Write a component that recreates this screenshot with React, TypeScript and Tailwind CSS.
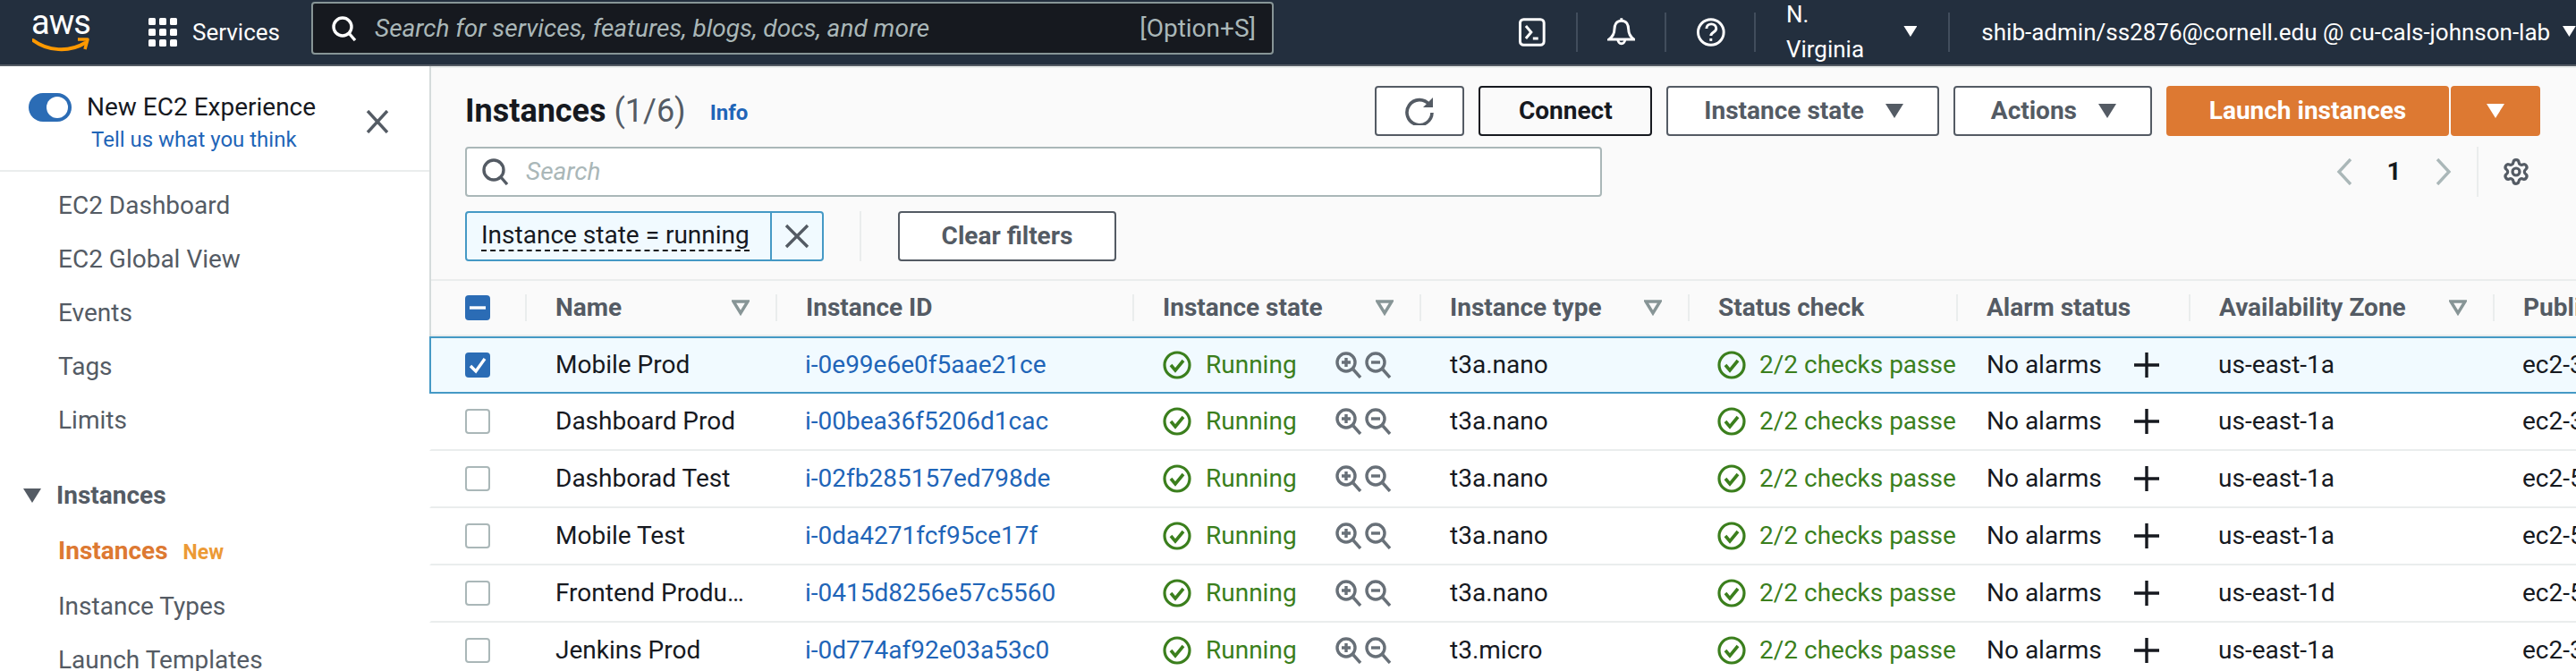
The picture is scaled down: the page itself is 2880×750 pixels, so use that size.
import { Settings } from "lucide-react";

const font = "font-['Roboto','Liberation_Sans',sans-serif]";

const instances = [
  { name: "Mobile Prod", id: "i-0e99e6e0f5aae21ce", type: "t3a.nano", zone: "us-east-1a", dns: "ec2-3-91-44-120.compute-1", selected: true },
  { name: "Dashboard Prod", id: "i-00bea36f5206d1cac", type: "t3a.nano", zone: "us-east-1a", dns: "ec2-3-84-12-77.compute-1" },
  { name: "Dashborad Test", id: "i-02fb285157ed798de", type: "t3a.nano", zone: "us-east-1a", dns: "ec2-54-80-31-9.compute-1" },
  { name: "Mobile Test", id: "i-0da4271fcf95ce17f", type: "t3a.nano", zone: "us-east-1a", dns: "ec2-52-23-17-64.compute-1" },
  { name: "Frontend Production", id: "i-0415d8256e57c5560", type: "t3a.nano", zone: "us-east-1d", dns: "ec2-54-90-66-18.compute-1" },
  { name: "Jenkins Prod", id: "i-0d774af92e03a53c0", type: "t3.micro", zone: "us-east-1a", dns: "ec2-3-208-9-41.compute-1" },
];

const columns = [
  { label: "Name", sort: true },
  { label: "Instance ID" },
  { label: "Instance state", sort: true },
  { label: "Instance type", sort: true },
  { label: "Status check" },
  { label: "Alarm status" },
  { label: "Availability Zone", sort: true },
  { label: "Public IPv4 DNS" },
];

const gridCols = "grid-cols-[105px_280px_399px_321px_300px_300px_260px_340px_1fr]";

function Caret({ className }: { className: string }) {
  return (
    <svg viewBox="0 0 20 16" className={className} fill="currentColor">
      <path d="M0 0h20L10 16z" />
    </svg>
  );
}

function HeaderDivider() {
  return <span className="h-[44px] w-[2px] shrink-0 bg-[#414d5c]" />;
}

function TopBar() {
  return (
    <header className="flex h-[74px] shrink-0 items-start border-b-2 border-[#545b64] bg-[#232f3e] text-white">
      <div className="flex h-[72px] items-center">
        <div className="ml-[36px] flex w-[64px] flex-col items-center">
          <span className="h-[30px] text-[38px] leading-[26px] font-normal tracking-[-1px]">aws</span>
          <svg viewBox="0 0 64 18" className="h-[18px] w-[64px]" fill="none">
            <path d="M1 3c16 12 40 14 58 3" stroke="#f90" strokeWidth="4" strokeLinecap="round" />
            <path d="M51 2h11l-3 11" stroke="#f90" strokeWidth="3.5" strokeLinejoin="round" />
          </svg>
        </div>
        <span className="ml-[33px]">
          <HeaderDivider />
        </span>
        <svg viewBox="0 0 32 32" className="ml-[33px] h-[32px] w-[32px]" fill="white">
          {[0, 12, 24].flatMap((y) =>
            [0, 12, 24].map((x) => <rect key={`${x}-${y}`} x={x} y={y} width="8" height="8" rx="1.5" />),
          )}
        </svg>
        <span className="ml-[17px] text-[26px]">Services</span>
      </div>
      <div className="mt-[2px] ml-[35px] flex h-[59px] w-[1078px] items-center rounded-[4px] border-2 border-[#879596] bg-[#16191f] pr-[18px] pl-[21px] text-[#aab7b8]">
        <svg viewBox="0 0 28 28" className="h-[28px] w-[28px]" fill="none" stroke="white" strokeWidth="3.4">
          <circle cx="12" cy="12" r="10" />
          <path d="M19 19l7 8" />
        </svg>
        <span className="ml-[20px] text-[28px] italic">Search for services, features, blogs, docs, and more</span>
        <span className="ml-auto text-[28px]">[Option+S]</span>
      </div>
      <div className="flex h-[72px] items-center">
        <svg viewBox="0 0 30 32" className="ml-[274px] h-[32px] w-[30px]" fill="none" stroke="white" strokeWidth="3">
          <rect x="1.5" y="1.5" width="27" height="29" rx="4" />
          <path d="M8 9l6 7-6 7M16 23h6" />
        </svg>
        <span className="ml-[34px] flex">
          <HeaderDivider />
        </span>
        <svg viewBox="0 0 32 32" className="ml-[33px] h-[32px] w-[32px]" fill="none" stroke="white" strokeWidth="3">
          <path d="M16 3c-6 0-8 5-8 10 0 5-2 8-6 11h28c-4-3-6-6-6-11 0-5-2-10-8-10z" />
          <path d="M12 24a4 5 0 0 0 8 0M16 0v3" />
        </svg>
        <span className="ml-[33px] flex">
          <HeaderDivider />
        </span>
        <svg viewBox="0 0 32 32" className="ml-[34px] h-[32px] w-[32px]" fill="none" stroke="white" strokeWidth="3">
          <circle cx="16" cy="16" r="14.5" />
          <path d="M11 12c0-7 11-7 11 0 0 4-6 4-6 8" />
          <path d="M16 23v3" />
        </svg>
        <span className="ml-[32px] flex">
          <HeaderDivider />
        </span>
        <span className="ml-[34px] text-[26px]">N. Virginia</span>
        <Caret className="mt-[-2px] ml-[13px] h-[12px] w-[16px]" />
        <span className="ml-[35px] flex">
          <HeaderDivider />
        </span>
        <span className="ml-[35px] text-[26px] whitespace-nowrap">shib-admin/ss2876@cornell.edu @ cu-cals-johnson-lab</span>
        <Caret className="mt-[-2px] ml-[14px] h-[12px] w-[15px]" />
      </div>
    </header>
  );
}

function SideNav() {
  const top = ["EC2 Dashboard", "EC2 Global View", "Events", "Tags", "Limits"];
  return (
    <aside className="w-[482px] shrink-0 border-r-2 border-[#d5dbdb] bg-white text-[#545b64]">
      <div className="relative h-[118px] border-b-2 border-[#eaeded]">
        <div className="flex items-center pt-[30px] pl-[32px]">
          <span className="flex h-[32px] w-[48px] items-center justify-end rounded-full bg-[#2b6cb5] pr-[4px]">
            <span className="h-[24px] w-[24px] rounded-full bg-white" />
          </span>
          <span className="ml-[17px] text-[28px] leading-[32px] text-[#16191f]">New EC2 Experience</span>
        </div>
        <p className="mt-[5px] ml-[102px] text-[24px] leading-[30px] text-[#1f65b8]">Tell us what you think</p>
        <svg viewBox="0 0 26 26" className="absolute top-[49px] left-[409px] h-[26px] w-[26px]" fill="none" stroke="#545b64" strokeWidth="3.4">
          <path d="M2 1l22 24M24 1L2 25" />
        </svg>
      </div>
      <nav className="pt-[8px]">
        {top.map((item) => (
          <div key={item} className="flex h-[60px] items-center pl-[65px] text-[28px]">
            {item}
          </div>
        ))}
        <div className="mt-[24px] flex h-[60px] items-center pl-[26px] text-[28px] font-bold">
          <Caret className="h-[16px] w-[20px]" />
          <span className="ml-[17px]">Instances</span>
        </div>
        <div className="flex h-[64px] items-center pl-[65px] text-[28px] font-bold text-[#dd7932]">
          Instances
          <span className="mt-[4px] ml-[17px] text-[23px] text-[#ec9a35]">New</span>
        </div>
        {["Instance Types", "Launch Templates"].map((item) => (
          <div key={item} className="flex h-[60px] items-center pl-[65px] text-[28px]">
            {item}
          </div>
        ))}
      </nav>
    </aside>
  );
}

function OutlineButton({ label, caret }: { label: string; caret?: boolean }) {
  return (
    <button className="flex h-[56px] items-center justify-center rounded-[4px] border-2 border-[#545b64] bg-white pl-[40px] pr-[38px] text-[28px] font-bold text-[#545b64]">
      {label}
      {caret && <Caret className="ml-[24px] h-[16px] w-[20px]" />}
    </button>
  );
}

function SearchIcon() {
  return (
    <svg viewBox="0 0 30 30" className="h-[30px] w-[30px]" fill="none" stroke="#545b64" strokeWidth="3.4">
      <circle cx="13" cy="13" r="11" />
      <path d="M21 21l7 8" />
    </svg>
  );
}

function Toolbar() {
  return (
    <div className="pt-[20px] pr-[40px] pl-[38px]">
      <div className="flex h-[56px] items-center">
        <h1 className="text-[36px] font-bold text-[#16191f]">
          Instances <span className="font-normal text-[#545b64]">(1/6)</span>
        </h1>
        <span className="mt-[4px] ml-[27px] text-[24px] font-bold text-[#1f65b8]">Info</span>
        <div className="ml-auto flex gap-[16px]">
          <button className="flex h-[56px] w-[100px] items-center justify-center rounded-[4px] border-2 border-[#545b64] bg-white">
            <svg viewBox="0 0 32 32" className="h-[32px] w-[32px]" fill="none" stroke="#545b64" strokeWidth="3.6">
              <path d="M27 9a14 14 0 1 0 3 9" />
              <path d="M31 1v11H20z" fill="#545b64" stroke="none" />
            </svg>
          </button>
          <button className="h-[56px] w-[194px] rounded-[4px] border-2 border-[#16191f] bg-[#fafafa] text-[28px] font-bold text-[#16191f]">
            Connect
          </button>
          <OutlineButton label="Instance state" caret />
          <OutlineButton label="Actions" caret />
          <div className="flex gap-[2px]">
            <button className="h-[56px] w-[316px] rounded-[4px] bg-[#dd7932] text-[28px] font-bold text-white">Launch instances</button>
            <button className="flex h-[56px] w-[100px] items-center justify-center rounded-[4px] bg-[#dd7932] text-white">
              <Caret className="h-[16px] w-[20px]" />
            </button>
          </div>
        </div>
      </div>
      <div className="mt-[12px] flex h-[56px] items-center">
        <div className="flex h-[56px] w-[1271px] items-center rounded-[4px] border-2 border-[#aab7b8] bg-white pl-[17px]">
          <SearchIcon />
          <span className="ml-[19px] text-[28px] text-[#aab7b8] italic">Search</span>
        </div>
        <div className="ml-auto flex h-[56px] items-center pr-[11px] text-[#aab7b8]">
          <svg viewBox="0 0 18 30" className="h-[30px] w-[18px]" fill="none" stroke="currentColor" strokeWidth="3.4">
            <path d="M16 1L3 15l13 14" />
          </svg>
          <span className="w-[93px] text-center text-[28px] font-bold text-[#16191f]">1</span>
          <svg viewBox="0 0 18 30" className="h-[30px] w-[18px]" fill="none" stroke="currentColor" strokeWidth="3.4">
            <path d="M2 1l13 14L2 29" />
          </svg>
          <span className="ml-[28px] h-[56px] w-[2px] bg-[#eaeded]" />
          <Settings className="ml-[26px] h-[32px] w-[32px] text-[#545b64]" strokeWidth={2.4} />
        </div>
      </div>
      <div className="mt-[16px] flex h-[56px] items-center">
        <div className="flex h-[56px] w-[401px] items-stretch rounded-[4px] border-2 border-[#4599c5] bg-[#f1faff]">
          <span className="flex w-[339px] items-center pl-[16px] text-[28px] text-[#16191f]">
            <span className="border-b-2 border-dashed border-[#16191f] leading-[32px] whitespace-nowrap">Instance state = running</span>
          </span>
          <span className="flex flex-1 items-center justify-center border-l-2 border-[#4599c5]">
            <svg viewBox="0 0 28 28" className="h-[28px] w-[28px]" fill="none" stroke="#545b64" strokeWidth="3.4">
              <path d="M2 2l24 24M26 2L2 26" />
            </svg>
          </span>
        </div>
        <span className="ml-[40px] h-[56px] w-[2px] bg-[#eaeded]" />
        <button className="ml-[41px] h-[56px] w-[244px] rounded-[4px] border-2 border-[#545b64] bg-white text-[28px] font-bold text-[#545b64]">
          Clear filters
        </button>
      </div>
    </div>
  );
}

function Checkbox({ state }: { state: "off" | "on" | "mixed" }) {
  if (state === "off") {
    return <span className="block h-[28px] w-[28px] rounded-[4px] border-2 border-[#aab7b8] bg-white" />;
  }
  return (
    <span className="flex h-[28px] w-[28px] items-center justify-center rounded-[4px] bg-[#2b6cb5]">
      <svg viewBox="0 0 28 28" className="h-[28px] w-[28px]" fill="none" stroke="white" strokeWidth="3.4">
        {state === "on" ? <path d="M6 15l6 6 10-14" /> : <path d="M5 14h18" />}
      </svg>
    </span>
  );
}

function StatusIcon() {
  return (
    <svg viewBox="0 0 32 32" className="h-[32px] w-[32px] shrink-0" fill="none" stroke="#3b7f1d" strokeWidth="3.2">
      <circle cx="16" cy="16" r="14" />
      <path d="M9 16l5 6 9-11" strokeWidth="3.6" />
    </svg>
  );
}

function ZoomIcon({ plus }: { plus?: boolean }) {
  return (
    <svg viewBox="0 0 30 30" className="h-[30px] w-[30px]" fill="none" stroke="#687078" strokeWidth="3.4">
      <circle cx="12" cy="12" r="10" />
      <path d="M20 20l8 9" />
      <path d={plus ? "M7 12h10M12 7v10" : "M7 12h10"} />
    </svg>
  );
}

function InstanceRow({ row }: { row: (typeof instances)[number] }) {
  return (
    <div
      className={`-ml-[2px] grid h-[64px] ${gridCols} items-center border-l-2 text-[28px] text-[#16191f] ${
        row.selected ? "border-y-2 border-[#4599c5] bg-[#f1faff]" : "border-b-2 border-l-transparent border-b-[#eaeded] bg-white"
      }`}
    >
      <div className="pl-[38px]">
        <Checkbox state={row.selected ? "on" : "off"} />
      </div>
      <div className="truncate pl-[34px] pr-[35px]">{row.name}</div>
      <div className="pl-[33px] text-[#1f65b8]">{row.id}</div>
      <div className="flex items-center pl-[34px]">
        <StatusIcon />
        <span className="ml-[16px] w-[145px] text-[#3b7f1d]">Running</span>
        <ZoomIcon plus />
        <span className="ml-[3px]">
          <ZoomIcon />
        </span>
      </div>
      <div className="pl-[34px]">{row.type}</div>
      <div className="flex items-center overflow-hidden pl-[33px] whitespace-nowrap text-[#3b7f1d]">
        <StatusIcon />
        <span className="ml-[15px]">2/2 checks passed</span>
      </div>
      <div className="flex items-center pl-[34px]">
        <span className="w-[164px]">No alarms</span>
        <svg viewBox="0 0 30 30" className="h-[30px] w-[30px]" fill="none" stroke="#16191f" strokeWidth="3.4">
          <path d="M1 15h28M15 1v28" />
        </svg>
      </div>
      <div className="pl-[33px]">{row.zone}</div>
      <div className="overflow-hidden pl-[33px] whitespace-nowrap">{row.dns}</div>
    </div>
  );
}

function InstanceTable() {
  return (
    <div className="mt-[20px] border-t-2 border-[#eaeded]">
      <div className={`grid h-[62px] ${gridCols} border-b-2 border-[#eaeded] bg-[#fafafa] text-[28px] font-bold text-[#545b64]`}>
        <div className="flex items-center pl-[38px]">
          <Checkbox state="mixed" />
        </div>
        {columns.map((col) => (
          <div key={col.label} className="flex items-center overflow-hidden whitespace-nowrap">
            <span className="h-[30px] w-[2px] shrink-0 bg-[#eaeded]" />
            <span className="ml-[32px]">{col.label}</span>
            {col.sort && <span className="ml-auto mr-[29px] text-[#879596]"><svg viewBox="0 0 20 18" className="h-[18px] w-[20px]" fill="none" stroke="currentColor" strokeWidth="3.4"><path d="M2 2h16l-8 13z" /></svg></span>}
          </div>
        ))}
      </div>
      {instances.map((row) => (
        <InstanceRow key={row.id} row={row} />
      ))}
    </div>
  );
}

export default function App() {
  return (
    <div className={`flex h-screen w-full flex-col overflow-hidden bg-[#fafafa] ${font}`}>
      <TopBar />
      <div className="flex min-h-0 flex-1">
        <SideNav />
        <main className="min-w-0 flex-1 border-t-2 border-[#eaeded]">
          <Toolbar />
          <InstanceTable />
        </main>
      </div>
    </div>
  );
}
